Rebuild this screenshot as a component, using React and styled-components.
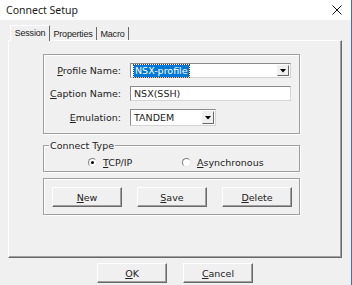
import React from 'react';
import styled, { createGlobalStyle } from 'styled-components';

const colors = {
  face: '#f0f0f0',
  light: '#ffffff',
  shadow: '#a0a0a0',
  dark: '#696969',
  text: '#222222',
  field: '#ffffff',
  select: '#0078d7',
};

const GlobalStyle = createGlobalStyle`
  html, body {
    margin: 0;
    padding: 0;
    background: ${colors.face};
  }
  * {
    box-sizing: border-box;
  }
`;

const Window = styled.div`
  width: 352px;
  height: 285px;
  background: ${colors.face};
  border-right: 1px solid #4a6f98;
  display: flex;
  flex-direction: column;
  font-family: 'DejaVu Sans', Verdana, sans-serif;
  font-size: 9.5px;
  color: ${colors.text};
  overflow: hidden;
`;

const TitleBar = styled.div`
  height: 20px;
  flex-shrink: 0;
  background: #ffffff;
  display: flex;
  align-items: center;
  justify-content: space-between;
  padding: 0 9px 0 6px;
`;

const Title = styled.span`
  font-family: 'Noto Sans', 'Open Sans', sans-serif;
  font-size: 10.5px;
  color: #1a1a1a;
`;

const Body = styled.div`
  padding: 5px 9px 0 8px;
  display: flex;
  flex-direction: column;
`;

const TabRow = styled.div`
  display: flex;
  align-items: flex-start;
  height: 15px;
  padding-left: 2px;
  position: relative;
  z-index: 1;
`;

const Tab = styled.div`
  font-family: 'Liberation Sans', Arial, sans-serif;
  font-size: 9px;
  letter-spacing: -0.2px;
  height: ${(p) => (p.$active ? '16px' : '13px')};
  margin-top: ${(p) => (p.$active ? '0' : '2px')};
  padding: 2px 3px 0 3px;
  background: ${colors.face};
  border-left: ${(p) => (p.$active ? `1px solid ${colors.light}` : 'none')};
  border-top: ${(p) => (p.$active ? `1px solid ${colors.light}` : 'none')};
  border-right: 1px solid ${colors.dark};
  width: ${(p) => p.$w}px;
  text-align: center;
  white-space: nowrap;
  color: #1a1a1a;
`;

const Panel = styled.div`
  width: 334px;
  height: 218px;
  border: 1px solid;
  border-color: ${colors.light} ${colors.dark} ${colors.dark} ${colors.light};
  box-shadow: inset -1px -1px ${colors.shadow};
  padding: 13px 0 0 34px;
  display: flex;
  flex-direction: column;
`;

const Group = styled.div`
  width: 257px;
  height: ${(p) => p.$h}px;
  margin-top: ${(p) => p.$mt || 0}px;
  border: 1px solid ${colors.shadow};
  box-shadow: inset 1px 1px ${colors.light}, 1px 1px ${colors.light};
  padding: ${(p) => p.$pad};
`;

const FieldGrid = styled.div`
  display: grid;
  grid-template-columns: 77px auto;
  grid-template-rows: 15px 15px 17px;
  column-gap: 9px;
  row-gap: 8px;
  align-items: center;
`;

const Label = styled.label`
  text-align: right;
  white-space: nowrap;
`;

const Key = styled.span`
  text-decoration: underline;
  text-underline-offset: 1px;
`;

const Combo = styled.div`
  width: ${(p) => p.$w}px;
  height: 100%;
  background: ${colors.field};
  border: 1px solid;
  border-color: #8a8a8a #d4d4d4 #d4d4d4 #8a8a8a;
  display: flex;
  align-items: center;
  padding: 1px;
`;

const ComboText = styled.span`
  flex: 1;
  padding-left: 2px;
  line-height: 11px;
  white-space: nowrap;
`;

const Selected = styled.span`
  background: ${colors.select};
  color: #ffffff;
  padding: 0 1px;
  line-height: 12px;
  display: inline-block;
  outline: 1px dotted #444;
`;

const DropButton = styled.div`
  width: 12px;
  height: 100%;
  background: ${colors.face};
  border: 1px solid;
  border-color: ${colors.face} ${colors.dark} ${colors.dark} ${colors.face};
  display: flex;
  align-items: center;
  justify-content: center;
`;

const TextField = styled.div`
  width: 161px;
  height: 100%;
  background: ${colors.field};
  border: 1px solid;
  border-color: #8a8a8a #d4d4d4 #d4d4d4 #8a8a8a;
  padding-left: 3px;
  display: flex;
  align-items: center;
`;

const FieldSet = styled.fieldset`
  width: 257px;
  height: 32px;
  margin: 6px 0 0 0;
  padding: 0 0 0 5px;
  border: 1px solid ${colors.shadow};
  box-shadow: inset 1px 1px ${colors.light}, 1px 1px ${colors.light};
`;

const Legend = styled.legend`
  padding: 0 1px;
  line-height: 11px;
`;

const RadioRow = styled.div`
  display: flex;
  align-items: center;
  padding-left: 39px;
  margin-top: 6px;
`;

const RadioItem = styled.div`
  display: flex;
  align-items: center;
  gap: 6px;
  width: ${(p) => p.$w}px;
`;

const RadioCircle = styled.span`
  width: 9px;
  height: 9px;
  border-radius: 50%;
  border: 1px solid;
  border-color: #808080 #e8e8e8 #e8e8e8 #808080;
  background: #ffffff;
  display: flex;
  align-items: center;
  justify-content: center;

  &::after {
    content: '';
    width: 3px;
    height: 3px;
    border-radius: 50%;
    background: ${(p) => (p.$checked ? '#000' : 'transparent')};
  }
`;

const ButtonRow = styled.div`
  display: flex;
  gap: 15px;
`;

const Button = styled.div`
  width: 70px;
  height: 20px;
  background: ${colors.face};
  border: 1px solid;
  border-color: ${colors.light} ${colors.dark} ${colors.dark} ${colors.light};
  box-shadow: inset -1px -1px ${colors.shadow};
  display: flex;
  align-items: center;
  justify-content: center;
`;

const Footer = styled.div`
  display: flex;
  justify-content: center;
  gap: 16px;
  margin-top: 5px;
`;

const Arrow = () => (
  <svg width="6" height="4" viewBox="0 0 6 4">
    <polygon points="0,0 6,0 3,3.5" fill="#000" />
  </svg>
);

const CloseIcon = () => (
  <svg width="10" height="10" viewBox="0 0 10 10">
    <path d="M0.5 0.5 L9.5 9.5 M9.5 0.5 L0.5 9.5" stroke="#111" strokeWidth="1" />
  </svg>
);

const App = () => {
  return (
    <>
      <GlobalStyle />
      <Window>
        <TitleBar>
          <Title>Connect Setup</Title>
          <CloseIcon />
        </TitleBar>
        <Body>
          <TabRow>
            <Tab $active $w={40}>Session</Tab>
            <Tab $w={47}>Properties</Tab>
            <Tab $w={32}>Macro</Tab>
          </TabRow>
          <Panel>
            <Group $h={80} $pad="8px 0 0 0">
              <FieldGrid>
                <Label>
                  <Key>P</Key>rofile Name:
                </Label>
                <Combo $w={161}>
                  <ComboText>
                    <Selected>NSX-profile</Selected>
                  </ComboText>
                  <DropButton>
                    <Arrow />
                  </DropButton>
                </Combo>
                <Label>
                  <Key>C</Key>aption Name:
                </Label>
                <TextField>NSX(SSH)</TextField>
                <Label>
                  <Key>E</Key>mulation:
                </Label>
                <Combo $w={86}>
                  <ComboText>TANDEM</ComboText>
                  <DropButton>
                    <Arrow />
                  </DropButton>
                </Combo>
              </FieldGrid>
            </Group>
            <FieldSet>
              <Legend>Connect Type</Legend>
              <RadioRow>
                <RadioItem $w={94}>
                  <RadioCircle $checked />
                  <span>
                    <Key>T</Key>CP/IP
                  </span>
                </RadioItem>
                <RadioItem>
                  <RadioCircle />
                  <span>
                    <Key>A</Key>synchronous
                  </span>
                </RadioItem>
              </RadioRow>
            </FieldSet>
            <Group $h={37} $mt={6} $pad="8px 0 0 8px">
              <ButtonRow>
                <Button>
                  <Key>N</Key>ew
                </Button>
                <Button>
                  <Key>S</Key>ave
                </Button>
                <Button>
                  <Key>D</Key>elete
                </Button>
              </ButtonRow>
            </Group>
          </Panel>
          <Footer>
            <Button>
              <Key>O</Key>K
            </Button>
            <Button>
              <Key>C</Key>ancel
            </Button>
          </Footer>
        </Body>
      </Window>
    </>
  );
};

export default App;
